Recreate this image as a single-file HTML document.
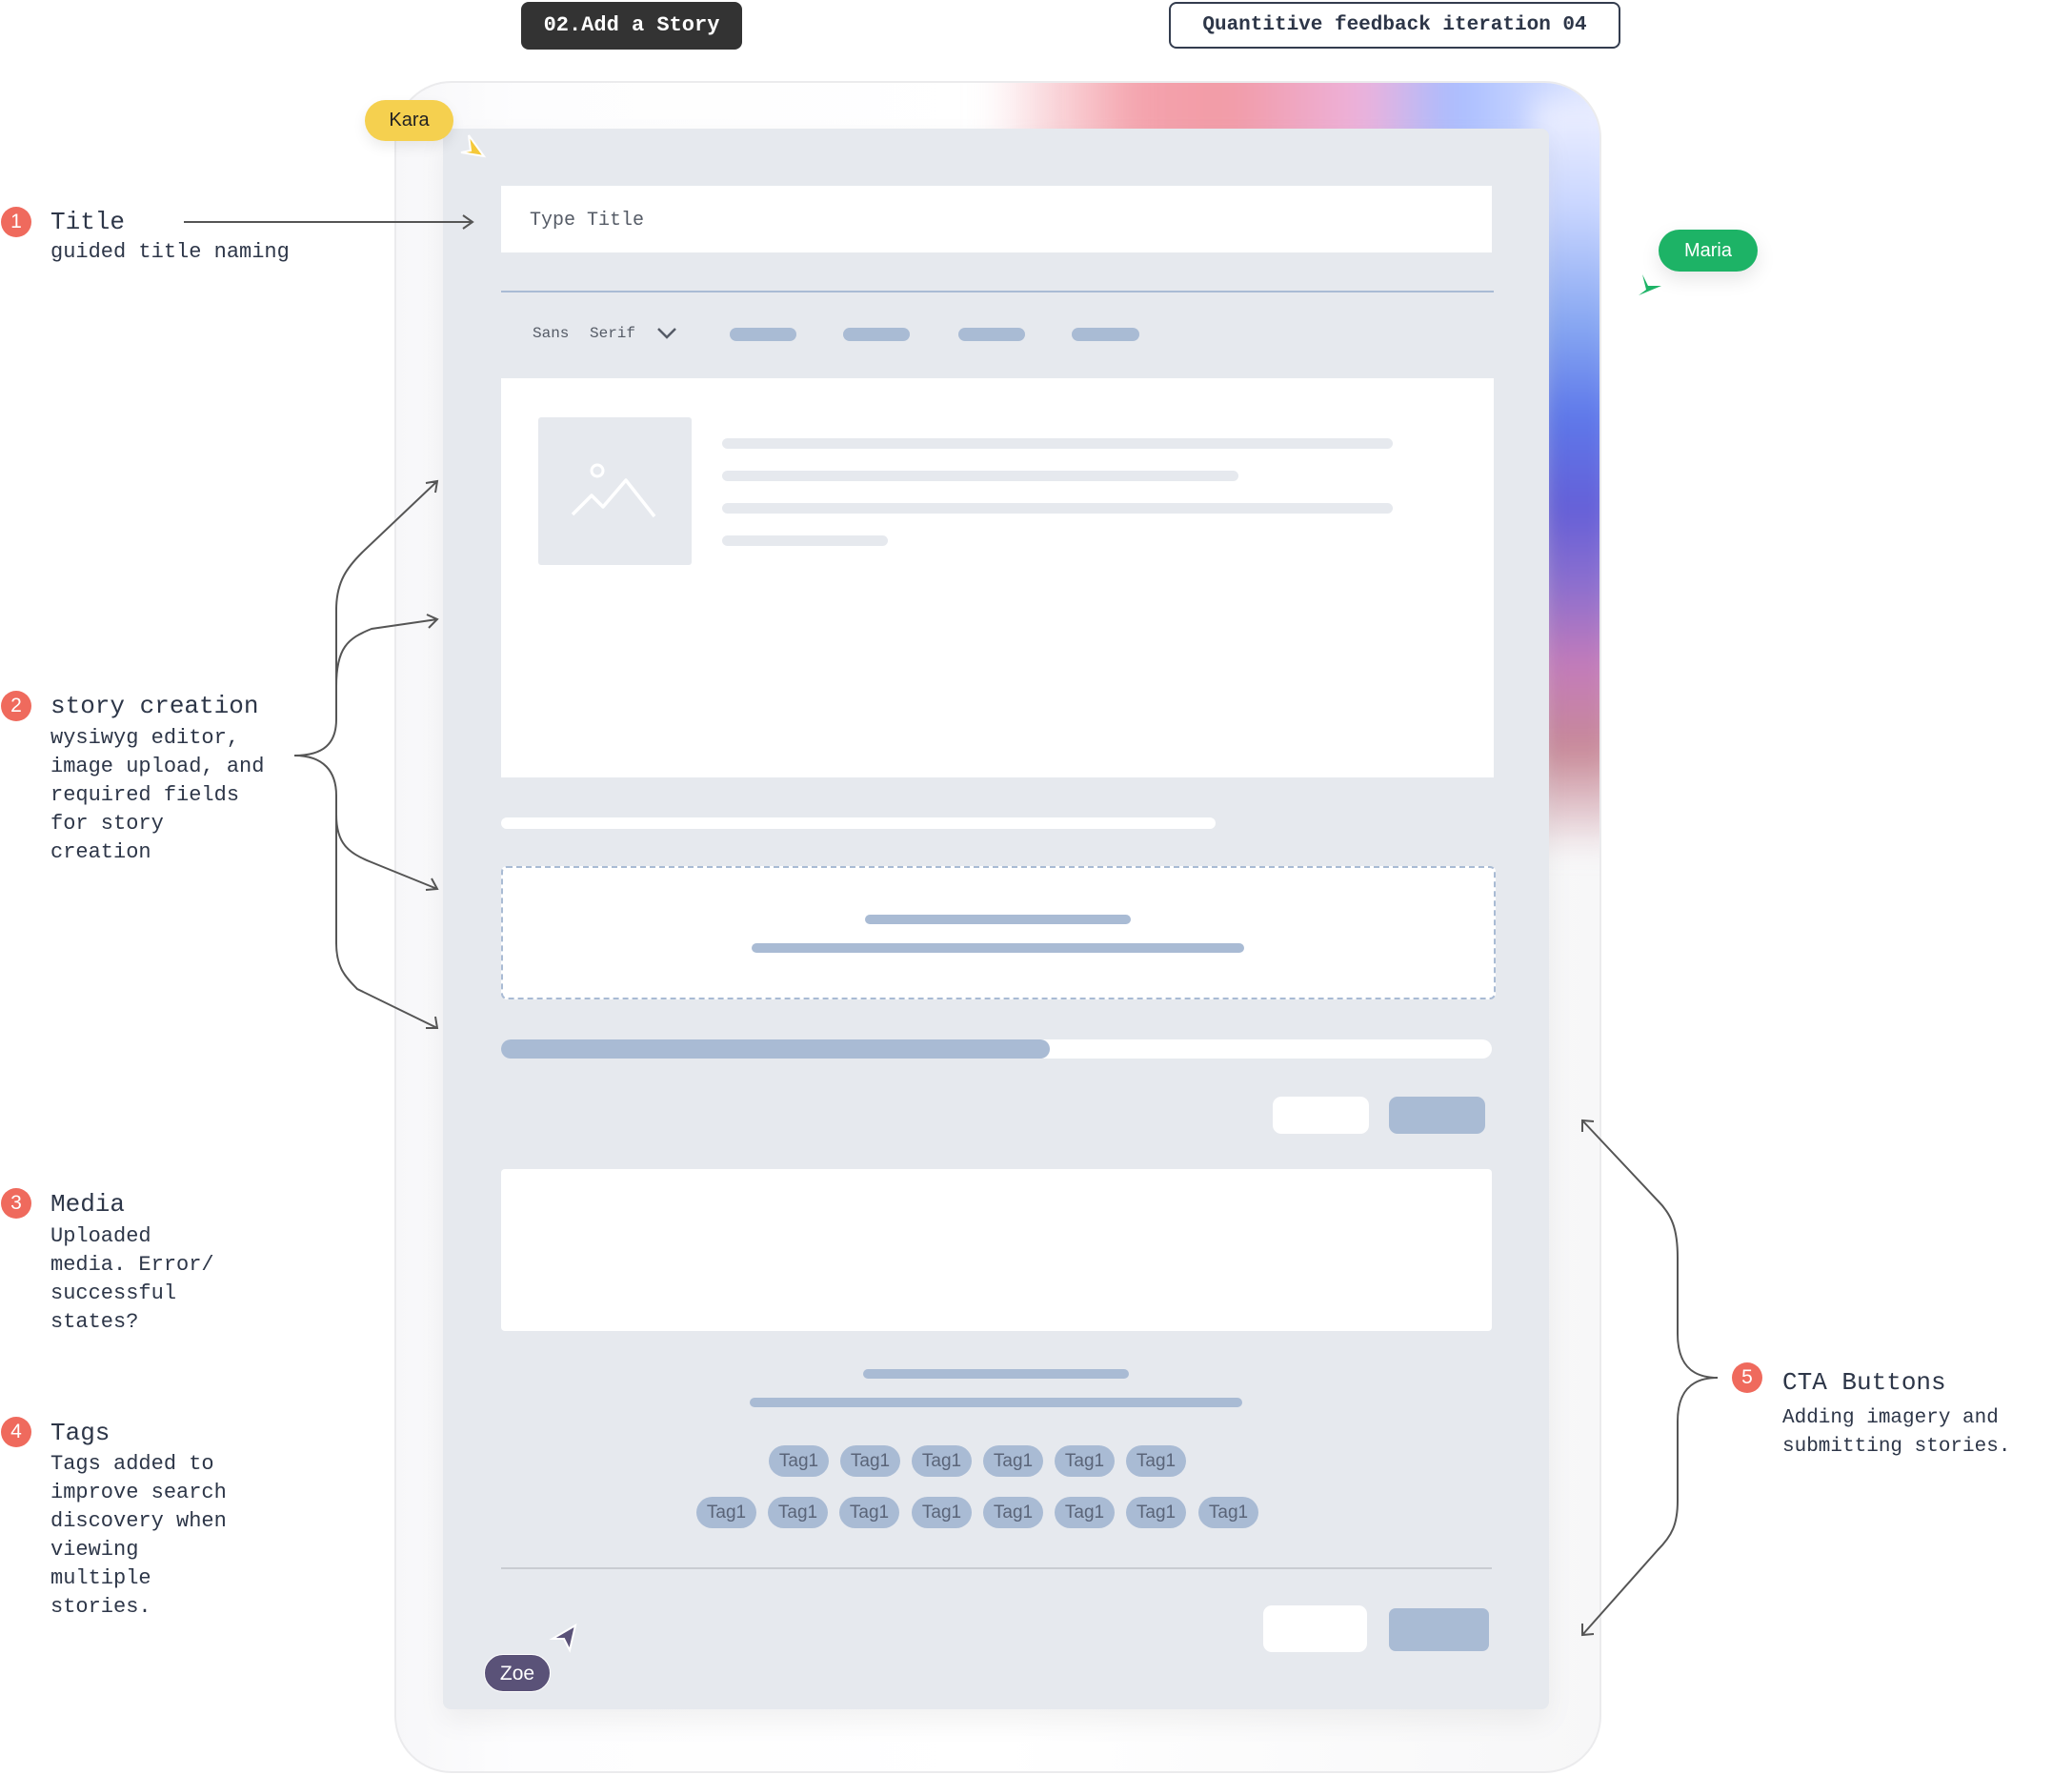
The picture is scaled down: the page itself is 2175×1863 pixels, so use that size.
<!DOCTYPE html>
<html><head><meta charset="utf-8"><style>
*{margin:0;padding:0;box-sizing:border-box}
body{width:2175px;height:1863px;background:#fff;position:relative;overflow:hidden;font-family:"Liberation Mono",monospace;color:#2d3648}
.a{position:absolute}
.sans{font-family:"Liberation Sans",sans-serif}
.num{position:absolute;width:32px;height:32px;border-radius:50%;background:#ef6a5d;color:#fff;font-family:"Liberation Sans",sans-serif;font-size:21px;text-align:center;line-height:32px}
.h{position:absolute;font-size:26px;white-space:nowrap}
.b{position:absolute;font-size:22px;line-height:30px;white-space:pre}
.pill{position:absolute;height:14px;border-radius:7px;background:#a9bbd4}
.ln{position:absolute;height:11px;border-radius:6px;background:#e6e9ee}
.bl{position:absolute;height:10px;border-radius:5px;background:#a9bbd4}
.tag{position:absolute;width:63px;height:33px;border-radius:17px;background:#a9bbd4;color:#5a6478;font-family:"Liberation Sans",sans-serif;font-size:19px;text-align:center;line-height:33px}
</style></head><body>

<div class="a" style="left:414px;top:85px;width:1267px;height:1776px;border-radius:60px;border:2px solid #ebebed;background:linear-gradient(90deg,#f7f7f9,#fdfdfe 10%,#fff 50%,#f7f7f8);overflow:hidden">
  <div class="a" style="left:620px;top:-40px;width:720px;height:120px;filter:blur(18px);background:linear-gradient(90deg,rgba(255,255,255,0) 0%,#f4a3ad 22%,#f29ba6 35%,#edb2dc 55%,#a8bcff 68%,#d6e0ff 85%,rgba(255,255,255,0) 100%)"></div>
  <div class="a" style="left:1195px;top:20px;width:90px;height:790px;filter:blur(14px);background:linear-gradient(180deg,#eef0ff 0%,#c9d6ff 14%,#86a6f2 30%,#5e78ea 42%,#6560d8 54%,#8c6fcf 64%,#c47cba 75%,#c88a98 86%,rgba(255,255,255,0) 100%)"></div>
</div>

<div class="a" style="left:465px;top:135px;width:1161px;height:1659px;background:#e6e9ee;border-radius:8px;box-shadow:0 12px 30px rgba(0,0,0,0.06)"></div>

<div class="a" style="left:526px;top:195px;width:1040px;height:70px;background:#fff"></div>
<div class="a" style="left:556px;top:220px;font-size:20px;color:#555b66">Type Title</div>
<div class="a" style="left:526px;top:305px;width:1042px;height:2px;background:#a9bbd4"></div>

<div class="a" style="left:559px;top:341px;font-size:16px;color:#555b66">Sans</div>
<div class="a" style="left:619px;top:341px;font-size:16px;color:#555b66">Serif</div>
<svg class="a" style="left:688px;top:342px" width="24" height="16"><path d="M3 3 L12 12 L21 3" fill="none" stroke="#555b66" stroke-width="2.5"/></svg>
<div class="pill" style="left:766px;top:344px;width:70px"></div>
<div class="pill" style="left:885px;top:344px;width:70px"></div>
<div class="pill" style="left:1006px;top:344px;width:70px"></div>
<div class="pill" style="left:1125px;top:344px;width:71px"></div>

<div class="a" style="left:526px;top:397px;width:1042px;height:419px;background:#fff"></div>
<div class="a" style="left:565px;top:438px;width:161px;height:155px;background:#e6e9ee;border-radius:3px"></div>
<svg class="a" style="left:595px;top:478px" width="100" height="70"><circle cx="32" cy="16" r="6" fill="none" stroke="#fff" stroke-width="3"/><path d="M6 62 L26 42 L38 54 L62 26 L92 64" fill="none" stroke="#fff" stroke-width="3.5" stroke-linejoin="round"/></svg>
<div class="ln" style="left:758px;top:460px;width:704px"></div>
<div class="ln" style="left:758px;top:494px;width:542px"></div>
<div class="ln" style="left:758px;top:528px;width:704px"></div>
<div class="ln" style="left:758px;top:562px;width:174px"></div>

<div class="a" style="left:526px;top:858px;width:750px;height:12px;background:#fff;border-radius:6px"></div>

<div class="a" style="left:526px;top:909px;width:1044px;height:140px;background:#fff;border:2px dashed #a9bbd4;border-radius:6px"></div>
<div class="bl" style="left:908px;top:960px;width:279px"></div>
<div class="bl" style="left:789px;top:990px;width:517px"></div>

<div class="a" style="left:526px;top:1091px;width:1040px;height:20px;background:#fff;border-radius:10px"></div>
<div class="a" style="left:526px;top:1091px;width:576px;height:20px;background:#a9bbd4;border-radius:10px"></div>

<div class="a" style="left:1336px;top:1151px;width:101px;height:39px;background:#fff;border-radius:9px"></div>
<div class="a" style="left:1458px;top:1151px;width:101px;height:39px;background:#a9bbd4;border-radius:9px"></div>

<div class="a" style="left:526px;top:1227px;width:1040px;height:170px;background:#fff;border-radius:4px"></div>
<div class="bl" style="left:906px;top:1437px;width:279px"></div>
<div class="bl" style="left:787px;top:1467px;width:517px"></div>

<div class="tag" style="left:807px;top:1517px">Tag1</div>
<div class="tag" style="left:882px;top:1517px">Tag1</div>
<div class="tag" style="left:957px;top:1517px">Tag1</div>
<div class="tag" style="left:1032px;top:1517px">Tag1</div>
<div class="tag" style="left:1107px;top:1517px">Tag1</div>
<div class="tag" style="left:1182px;top:1517px">Tag1</div>
<div class="tag" style="left:731px;top:1571px">Tag1</div>
<div class="tag" style="left:806px;top:1571px">Tag1</div>
<div class="tag" style="left:881px;top:1571px">Tag1</div>
<div class="tag" style="left:957px;top:1571px">Tag1</div>
<div class="tag" style="left:1032px;top:1571px">Tag1</div>
<div class="tag" style="left:1107px;top:1571px">Tag1</div>
<div class="tag" style="left:1182px;top:1571px">Tag1</div>
<div class="tag" style="left:1258px;top:1571px">Tag1</div>

<div class="a" style="left:526px;top:1645px;width:1040px;height:2px;background:#c9ccd2"></div>
<div class="a" style="left:1326px;top:1685px;width:109px;height:49px;background:#fff;border-radius:9px"></div>
<div class="a" style="left:1458px;top:1688px;width:105px;height:45px;background:#a9bbd4;border-radius:7px"></div>

<div class="a" style="left:547px;top:2px;width:232px;height:50px;background:#333;border-radius:8px;color:#fff;font-size:22px;font-weight:bold;text-align:center;line-height:50px">02.Add a Story</div>
<div class="a" style="left:1227px;top:2px;width:474px;height:49px;border:2px solid #333c4e;border-radius:8px;font-size:21px;font-weight:bold;text-align:center;line-height:45px;color:#2d3648">Quantitive feedback iteration 04</div>

<div class="a sans" style="left:383px;top:105px;width:93px;height:43px;background:#f5d04f;border-radius:22px;text-align:center;line-height:43px;font-size:20px;color:#222;box-shadow:0 6px 14px rgba(0,0,0,0.08)">Kara</div>
<svg class="a" style="left:478px;top:138px" width="34" height="30"><path d="M14 4 L30 26 L6 22 L16 20 Z" fill="#f5c93a" stroke="#fff" stroke-width="2"/></svg>
<div class="a sans" style="left:1741px;top:241px;width:104px;height:44px;background:#1db366;border-radius:22px;text-align:center;line-height:44px;font-size:20px;color:#fff;box-shadow:0 8px 20px rgba(0,0,0,0.1)">Maria</div>
<svg class="a" style="left:1716px;top:284px" width="32" height="30"><path d="M8 4 L12 20 L4 26 L28 16 L14 16 Z" fill="#1db366"/></svg>
<div class="a sans" style="left:508px;top:1736px;width:70px;height:40px;background:#5a5278;border-radius:20px;text-align:center;line-height:40px;font-size:21px;color:#fff;border:1px solid #fff">Zoe</div>
<svg class="a" style="left:576px;top:1702px" width="32" height="34"><path d="M28 4 L4 18 L16 18 L22 30 Z" fill="#5a5278" stroke="#fff" stroke-width="2"/></svg>

<div class="num" style="left:1px;top:217px">1</div>
<div class="h" style="left:53px;top:218px">Title</div>
<div class="b" style="left:53px;top:250px">guided title naming</div>

<div class="num" style="left:1px;top:725px">2</div>
<div class="h" style="left:53px;top:726px">story creation</div>
<div class="b" style="left:53px;top:760px">wysiwyg editor,
image upload, and
required fields
for story
creation</div>

<div class="num" style="left:1px;top:1247px">3</div>
<div class="h" style="left:53px;top:1249px">Media</div>
<div class="b" style="left:53px;top:1283px">Uploaded
media. Error/
successful
states?</div>

<div class="num" style="left:1px;top:1487px">4</div>
<div class="h" style="left:53px;top:1489px">Tags</div>
<div class="b" style="left:53px;top:1522px">Tags added to
improve search
discovery when
viewing
multiple
stories.</div>

<div class="num" style="left:1818px;top:1430px">5</div>
<div class="h" style="left:1871px;top:1436px">CTA Buttons</div>
<div class="b" style="left:1871px;top:1474px;font-size:21px">Adding imagery and
submitting stories.</div>

<svg class="a" style="left:0;top:0" width="2175" height="1863" fill="none" stroke="#555" stroke-width="2">
  <path d="M193 233 H496 M486 226 L496 233 L486 240"/>
  <path d="M309 793 C340 793 353 780 353 755 V640 C353 610 365 595 380 580 L459 505 M447 507 L459 505 L457 517"/>
  <path d="M353 720 C353 680 365 670 390 660 L459 650 M448 645 L459 650 L450 659"/>
  <path d="M309 793 C340 793 353 810 353 835 V990 C353 1015 362 1025 375 1038 L459 1079 M447 1079 L459 1079 L457 1067"/>
  <path d="M353 855 C353 885 365 895 390 905 L459 933 M447 934 L459 933 L453 922"/>
  <path d="M1803 1446 C1774 1446 1761 1430 1761 1400 V1320 C1761 1290 1755 1275 1740 1260 L1661 1176 M1661 1188 L1661 1176 L1673 1177"/>
  <path d="M1803 1446 C1774 1446 1761 1462 1761 1492 V1575 C1761 1600 1755 1612 1740 1627 L1661 1716 M1661 1704 L1661 1716 L1673 1715"/>
</svg>
</body></html>
